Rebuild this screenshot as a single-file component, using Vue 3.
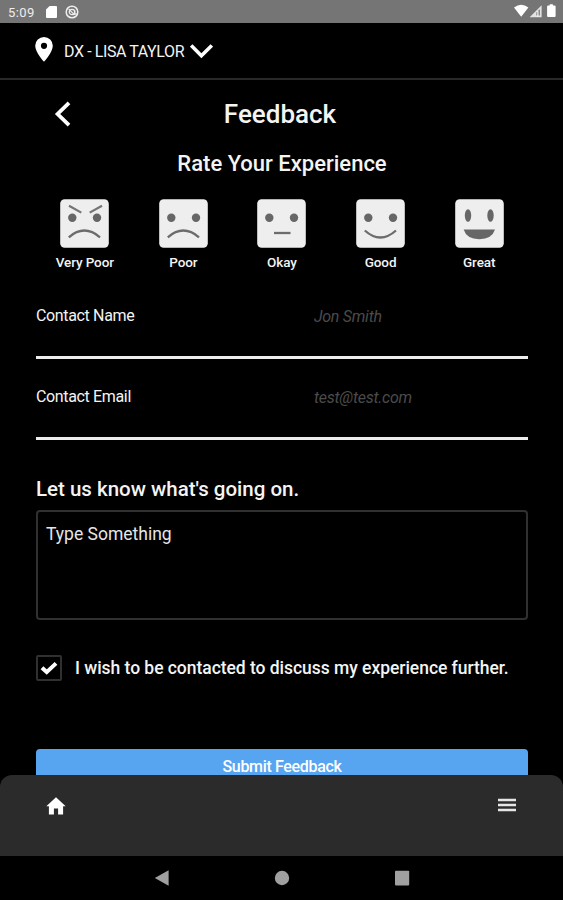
<template>
  <div class="screen">
    <!-- Status bar -->
    <div class="status-bar">
      <span class="clock">5:09</span>
      <svg class="sd-icon" viewBox="0 0 11 12" aria-hidden="true">
        <path d="M3.6 0H10a1 1 0 0 1 1 1v10a1 1 0 0 1-1 1H1a1 1 0 0 1-1-1V3.6z" fill="#fff" />
      </svg>
      <svg class="at-icon" viewBox="0 0 14 14" aria-hidden="true">
        <circle cx="7" cy="7" r="5.8" fill="none" stroke="#eee" stroke-width="1.5" />
        <circle cx="7" cy="7" r="2.7" fill="none" stroke="#eee" stroke-width="1.3" />
        <path d="M3.6 3.8l6 6M9.7 5v3.2q.4 1.5 2.4.6" fill="none" stroke="#eee" stroke-width="1.2" />
      </svg>
      <svg class="signal-icons" viewBox="0 0 44 14" aria-hidden="true">
        <path d="M0 3.6Q7.2-2 14.4 3.6L7.2 12.8z" fill="#fff" />
        <path d="M15.6 13.2L27.6 1.2v12z" fill="#e2e2e2" />
        <path d="M22.4 11.4V8.6l3.4-3.4v6.2z" fill="#757575" />
        <path d="M23.9 7v5.6" stroke="#fff" stroke-width="1.2" />
        <path d="M35.7.3h3.2v1.3h1.7q1 0 1 1v9.4q0 1-1 1h-6.5q-1 0-1-1v-9.4q0-1 1-1h1.6z" fill="#fff" />
      </svg>
    </div>

    <!-- Location picker -->
    <header class="location">
      <svg class="pin" viewBox="0 0 18 25" aria-hidden="true">
        <path d="M9 0a8.8 8.8 0 0 0-8.8 8.8C.2 15.3 9 24.8 9 24.8s8.8-9.5 8.8-16A8.8 8.8 0 0 0 9 0zm0 5.7a3.1 3.1 0 1 1 0 6.2 3.1 3.1 0 0 1 0-6.2z" fill="#fff" />
      </svg>
      <span class="location-name">DX - LISA TAYLOR</span>
      <svg class="chevron" viewBox="0 0 23 15" aria-hidden="true">
        <path d="M1.2 1.4l10.2 10.4L21.8 1.4" fill="none" stroke="#fff" stroke-width="3.6" />
      </svg>
    </header>

    <main class="content">
      <div class="title-row">
        <svg class="back" viewBox="0 0 17 26" aria-hidden="true">
          <path d="M15 1.9L3.6 13 15 24.1" fill="none" stroke="#fff" stroke-width="3.8" />
        </svg>
        <h1>Feedback</h1>
      </div>

      <h2>Rate Your Experience</h2>

      <div class="ratings">
        <div
          v-for="item in ratings"
          :key="item.label"
          class="rating"
          role="button"
          tabindex="0"
          @click="selected = item.label"
        >
          <svg class="face" viewBox="0 0 49 49" aria-hidden="true">
            <rect x=".2" y=".2" width="48.6" height="48.6" rx="4.5" fill="#eeeeee" />
            <path v-if="item.brows" d="M9 6.8l12.3 6.8M42 6.8l-12.3 6.8" fill="none" stroke="#747474" stroke-width="2.2" />
            <template v-if="item.label === 'Great'">
              <ellipse cx="13" cy="16.5" rx="3.2" ry="6.3" fill="#666" />
              <ellipse cx="35.5" cy="16.5" rx="3.2" ry="6.3" fill="#666" />
            </template>
            <template v-else>
              <circle cx="12.3" cy="18.7" r="4.2" fill="#666" />
              <circle cx="37" cy="18.7" r="4.2" fill="#666" />
            </template>
            <path :d="item.mouth" :fill="item.filled ? '#666' : 'none'" :stroke="item.filled ? 'none' : '#6c6c6c'" stroke-width="2.3" />
          </svg>
          <span>{{ item.label }}</span>
        </div>
      </div>

      <label class="field">
        <span>Contact Name</span>
        <input v-model="name" type="text" placeholder="Jon Smith" />
      </label>
      <label class="field">
        <span>Contact Email</span>
        <input v-model="email" type="text" placeholder="test@test.com" />
      </label>

      <h3>Let us know what's going on.</h3>
      <textarea v-model="message" placeholder="Type Something"></textarea>

      <div class="contact-me" role="checkbox" :aria-checked="contactMe" @click="contactMe = !contactMe">
        <span class="box">
          <svg v-if="contactMe" viewBox="0 0 18 14" aria-hidden="true">
            <path d="M2 6.8l4.7 4.3L16 2.4" fill="none" stroke="#fff" stroke-width="4" />
          </svg>
        </span>
        <span class="contact-text">I wish to be contacted to discuss my experience further.</span>
      </div>

      <button class="submit" type="button">Submit Feedback</button>
    </main>

    <nav class="tab-bar">
      <svg class="home" viewBox="0 0 20 18" aria-hidden="true">
        <path d="M10 .3L.3 9.2h2.6v8.2h5v-5.8h4.2v5.8h5V9.2h2.6z" fill="#fff" />
      </svg>
      <svg class="menu" viewBox="0 0 18 14" aria-hidden="true">
        <path d="M0 2h18M0 7h18M0 12h18" stroke="#e6e6e6" stroke-width="2.6" />
      </svg>
    </nav>

    <div class="system-nav">
      <svg viewBox="0 0 16 16" aria-hidden="true"><path d="M.8 8L14.6.3v15.4z" fill="#a0a0a0" /></svg>
      <svg viewBox="0 0 16 16" aria-hidden="true"><circle cx="8" cy="8" r="7.2" fill="#a0a0a0" /></svg>
      <svg viewBox="0 0 16 16" aria-hidden="true"><rect x="1" y=".8" width="14.2" height="14.6" rx=".8" fill="#a0a0a0" /></svg>
    </div>
  </div>
</template>

<script setup>
import { ref } from 'vue'

const ratings = [
  { label: 'Very Poor', brows: true, mouth: 'M8.8 38.3Q24.3 24.8 40 38.3' },
  { label: 'Poor', mouth: 'M8.8 38.3Q24.3 24.8 40 38.3' },
  { label: 'Okay', mouth: 'M17 34h16.5' },
  { label: 'Good', mouth: 'M8.8 31.5Q24.3 45.5 40 31.5' },
  { label: 'Great', filled: true, mouth: 'M8.6 30.6h31.4Q37 40.2 24.3 40.2T8.6 30.6z' }
]

const selected = ref('')
const name = ref('')
const email = ref('')
const message = ref('')
const contactMe = ref(true)
</script>

<style>
body {
  margin: 0;
  background: #000;
}
</style>

<style scoped>
.screen {
  display: flex;
  flex-direction: column;
  width: 563px;
  height: 900px;
  overflow: hidden;
  background: #000;
  color: #f4f4f4;
  font-family: Roboto, "Liberation Sans", sans-serif;
}

.screen * {
  box-sizing: border-box;
}

svg {
  display: block;
  flex: none;
}

/* Status bar */
.status-bar {
  display: flex;
  align-items: center;
  flex: none;
  height: 23px;
  padding: 1px 8px 0;
  background: #757575;
}

.clock {
  width: 38px;
  font-size: 13px;
  letter-spacing: 0.4px;
  color: #eee;
}

.sd-icon {
  width: 11px;
  height: 12px;
}

.at-icon {
  width: 14px;
  height: 14px;
  margin-left: 8px;
}

.signal-icons {
  width: 44px;
  height: 14px;
  margin-left: auto;
  margin-right: -3.3px;
  margin-top: -2px;
}

/* Location picker */
.location {
  display: flex;
  align-items: center;
  flex: none;
  height: 57px;
  padding: 0 35px;
  border-bottom: 2px solid #292929;
}

.pin {
  width: 18px;
  height: 25px;
  margin-top: -3px;
}

.location-name {
  width: 121px;
  margin-top: 2px;
  margin-left: 11px;
  font-size: 16px;
  letter-spacing: -0.4px;
  white-space: nowrap;
}

.chevron {
  width: 23px;
  height: 15px;
  margin-top: 2px;
  margin-left: 5px;
}

/* Form */
.content {
  flex: none;
  height: 695px;
  padding: 0 35px 0 36px;
  overflow: hidden;
}

.title-row {
  display: grid;
  grid-template-columns: 60px 1fr 60px;
  align-items: center;
  height: 69px;
}

.back {
  width: 17px;
  height: 26px;
  margin-top: -1px;
  margin-left: 18px;
}

h1,
h2,
h3 {
  margin: 0;
  font-weight: 500;
  white-space: nowrap;
}

h1 {
  margin: -2px 4px 0 0;
  font-size: 26px;
  text-align: center;
}

h2 {
  height: 50px;
  font-size: 22px;
  line-height: 30px;
  text-align: center;
}

.ratings {
  display: grid;
  grid-template-columns: repeat(5, 98.6px);
  height: 98px;
  margin-left: -0.5px;
}

.rating {
  display: flex;
  flex-direction: column;
  align-items: center;
  font-size: 13.5px;
  font-weight: 500;
  line-height: 16px;
  letter-spacing: -0.1px;
  cursor: pointer;
}

.face {
  width: 49px;
  height: 49px;
  margin-bottom: 6px;
}

.field {
  display: flex;
  height: 81px;
  padding-top: 9px;
  font-size: 16px;
  line-height: 20px;
  letter-spacing: -0.35px;
  background: linear-gradient(#ececec, #ececec) 0 59px / 100% 3px no-repeat;
}

.field span {
  width: 278px;
}

.field input {
  width: 200px;
  height: 22px;
  padding: 0;
  border: 0;
  outline: 0;
  background: transparent;
  color: #fff;
  font: italic 16px/22px Roboto, "Liberation Sans", sans-serif;
  letter-spacing: -0.27px;
}

.field input::placeholder {
  color: #4b4b4b;
  opacity: 1;
}

h3 {
  height: 33px;
  margin-top: 18px;
  font-size: 20.5px;
  line-height: 24px;
}

textarea {
  display: block;
  width: 492px;
  height: 110px;
  padding: 11px 8px;
  border: 2px solid #303030;
  border-radius: 4px;
  outline: 0;
  resize: none;
  background: transparent;
  color: #fff;
  font: 17.5px/22px Roboto, "Liberation Sans", sans-serif;
}

textarea::placeholder {
  color: #e6e6e6;
  opacity: 1;
}

.contact-me {
  display: flex;
  align-items: center;
  height: 26px;
  margin-top: 35px;
  cursor: pointer;
}

.box {
  display: flex;
  align-items: center;
  justify-content: center;
  width: 26px;
  height: 26px;
  border: 2px solid #303030;
  border-radius: 2px;
}

.box svg {
  width: 18px;
  height: 14px;
}

.contact-text {
  margin-left: 13px;
  font-size: 17.5px;
  font-weight: 500;
  letter-spacing: -0.04px;
  white-space: nowrap;
}

.submit {
  display: block;
  width: 492px;
  height: 36px;
  margin-top: 68px;
  padding: 0;
  border: 0;
  border-radius: 4px;
  background: #57a5f1;
  color: #fff;
  font: 500 16px/36px Roboto, "Liberation Sans", sans-serif;
  letter-spacing: -0.33px;
}

/* Bottom navigation */
.tab-bar {
  display: flex;
  justify-content: space-between;
  flex: none;
  height: 81px;
  padding: 22px 46px 0;
  border-radius: 12px 12px 0 0;
  background: #2b2b2b;
}

.home {
  width: 20px;
  height: 18px;
}

.menu {
  width: 18px;
  height: 14px;
  margin-top: 1px;
  margin-right: 1px;
}

.system-nav {
  display: flex;
  align-items: center;
  justify-content: center;
  gap: 104px;
  flex: 1;
}

.system-nav svg {
  width: 16px;
  height: 16px;
}
</style>
